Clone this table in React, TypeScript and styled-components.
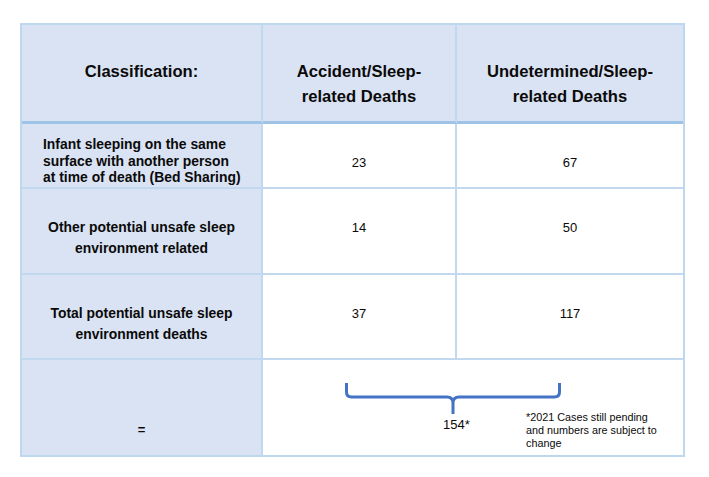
import React from 'react';
import styled, { createGlobalStyle } from 'styled-components';

const GlobalStyle = createGlobalStyle`
  html, body {
    margin: 0;
    padding: 0;
    background: #ffffff;
  }
  * {
    box-sizing: border-box;
  }
`;

const rows = [
  {
    label: ['Infant sleeping on the same', 'surface with another person', 'at time of death (Bed Sharing)'],
    accident: '23',
    undetermined: '67',
    labelPad: 12,
    numPad: 31,
    lineHeight: 16.5,
    left: true,
  },
  {
    label: ['Other potential unsafe sleep', 'environment related'],
    accident: '14',
    undetermined: '50',
    labelPad: 28,
    numPad: 28,
    lineHeight: 21,
    left: false,
  },
  {
    label: ['Total potential unsafe sleep', 'environment deaths'],
    accident: '37',
    undetermined: '117',
    labelPad: 28,
    numPad: 28,
    lineHeight: 21,
    left: false,
  },
];

const App = () => {
  return (
    <>
      <GlobalStyle />
      <Page>
        <Table>
          <HeaderCell>Classification:</HeaderCell>
          <HeaderCell>
            Accident/Sleep-
            <br />
            related Deaths
          </HeaderCell>
          <HeaderCell $last>
            Undetermined/Sleep-
            <br />
            related Deaths
          </HeaderCell>

          {rows.map((row) => (
            <React.Fragment key={row.label[0]}>
              <LabelCell $pad={row.labelPad} $lh={row.lineHeight} $left={row.left}>
                {row.label.map((line) => (
                  <LabelLine key={line}>{line}</LabelLine>
                ))}
              </LabelCell>
              <NumberCell $pad={row.numPad} $lh={row.lineHeight}>
                {row.accident}
              </NumberCell>
              <NumberCell $pad={row.numPad} $lh={row.lineHeight} $last>
                {row.undetermined}
              </NumberCell>
            </React.Fragment>
          ))}

          <TotalLabel>=</TotalLabel>
          <TotalCell>
            <Brace width="216" height="31" viewBox="0 0 216 31">
              <path
                d="M1.5 0 V9 Q1.5 14 6.5 14 H102 Q108 14 108 20 V31 M108 20 Q108 14 114 14 H209.5 Q214.5 14 214.5 9 V0"
                fill="none"
                stroke="#4472c4"
                strokeWidth="3"
              />
            </Brace>
            <TotalRow>
              <TotalNumber>154*</TotalNumber>
              <Note>
                *2021 Cases still pending
                <br />
                and numbers are subject to
                <br />
                change
              </Note>
            </TotalRow>
          </TotalCell>
        </Table>
      </Page>
    </>
  );
};

export default App;

const Page = styled.div`
  padding: 23px 0 0 20px;
  width: 709px;
  height: 477px;
  font-family: 'Liberation Sans', Arial, sans-serif;
  color: #0a0a0a;
`;

const Table = styled.div`
  width: 665px;
  display: grid;
  grid-template-columns: 241px 194px 226px;
  grid-template-rows: 99px 65px 86px 85px 95px;
  border: 2px solid #bdd7ee;
`;

const Cell = styled.div<{ $last?: boolean }>`
  border-right: ${({ $last }) => ($last ? 'none' : '2px solid #c2d8ee')};
  border-bottom: 2px solid #c2d8ee;
`;

const HeaderCell = styled(Cell)`
  background: #dae3f3;
  border-bottom: 3px solid #9dc3e6;
  padding-top: 34px;
  text-align: center;
  font-size: 16.6px;
  font-weight: bold;
  line-height: 25px;
`;

const LabelCell = styled(Cell)<{ $pad: number; $lh: number; $left: boolean }>`
  background: #dae3f3;
  padding: ${({ $pad, $left }) => ($left ? `${$pad}px 0 0 21px` : `${$pad}px 0 0 0`)};
  text-align: ${({ $left }) => ($left ? 'left' : 'center')};
  font-size: 13.9px;
  font-weight: bold;
  line-height: ${({ $lh }) => $lh}px;
`;

const LabelLine = styled.div`
  white-space: nowrap;
`;

const NumberCell = styled(Cell)<{ $pad: number; $lh: number }>`
  background: #ffffff;
  padding-top: ${({ $pad }) => $pad}px;
  text-align: center;
  font-size: 13px;
  line-height: ${({ $lh }) => $lh}px;
`;

const TotalLabel = styled.div`
  background: #dae3f3;
  border-right: 2px solid #c2d8ee;
  padding-top: 62px;
  text-align: center;
  font-size: 13px;
  font-weight: bold;
  line-height: 16px;
`;

const TotalCell = styled.div`
  grid-column: span 2;
  background: #ffffff;
  padding: 23px 0 0 82px;
  display: flex;
  flex-direction: column;
`;

const Brace = styled.svg`
  display: block;
`;

const TotalRow = styled.div`
  display: grid;
  grid-template-columns: 181px auto;
  margin-top: -3px;
`;

const TotalNumber = styled.div`
  padding: 5px 0 0 98px;
  font-size: 13px;
  line-height: 17px;
`;

const Note = styled.div`
  font-size: 10.8px;
  line-height: 13px;
`;
